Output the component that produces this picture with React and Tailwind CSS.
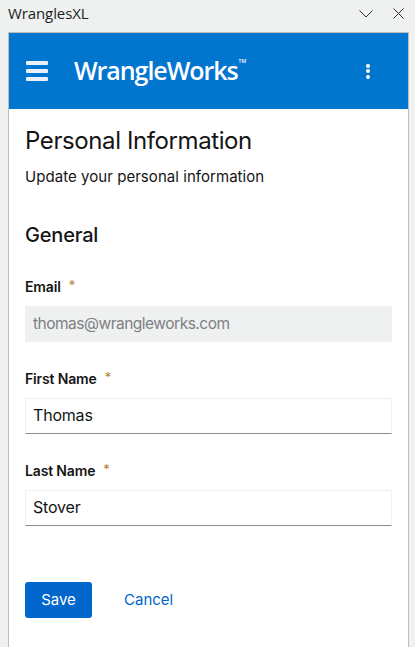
const font = "font-['Inter',sans-serif]";

function Field({ label, gap, value, disabled }) {
  return (
    <div className="flex flex-col">
      <div className="flex h-[20px] items-center pb-[2px] text-[14px] font-semibold tracking-[-0.15px] text-[#151515]">
        <span>{label}</span>
        <span className={`${gap} text-[13px] font-normal text-[#b5802f]`}>*</span>
      </div>
      {disabled ? (
        <div className="mt-[9px] flex h-[36px] items-center bg-[#eff0f0] px-[8px] text-[15.5px] tracking-[-0.5px] text-[#7d8084]">{value}</div>
      ) : (
        <div className="mt-[9px] flex h-[36px] items-center border border-[#f0f0f0] border-b-[#8a8d90] px-[7px] pb-[2px] text-[16px] tracking-[-0.2px] text-[#151515]">{value}</div>
      )}
    </div>
  );
}

export default function App() {
  return (
    <div className={`flex h-[647px] w-[415px] flex-col overflow-hidden bg-[#eff0f0] ${font}`}>
      <div className="flex h-[32px] shrink-0 items-center justify-between pb-[5px] pl-[8px] pr-[11px]">
        <span className="font-['Open_Sans',sans-serif] text-[15px] tracking-[-0.1px] text-[#201f1e]">WranglesXL</span>
        <div className="flex items-center gap-[20px]">
          <svg width="14" height="8" viewBox="0 0 14 8" fill="none" stroke="#323130" strokeWidth="1"><path d="M0.5 0.5 7 7 13.5 0.5" /></svg>
          <svg width="11" height="11" viewBox="0 0 11 11" fill="none" stroke="#323130" strokeWidth="1"><path d="M0.5 0.5 10.5 10.5M10.5 0.5 0.5 10.5" /></svg>
        </div>
      </div>
      <div className="ml-[8px] flex w-[401px] flex-1 flex-col border border-b-0 border-[#bdbdbd] bg-white">
        <header className="flex h-[76px] shrink-0 items-center bg-[#0275cf] pl-[17px] pr-[38px]">
          <div className="flex w-[22px] flex-col gap-[4px]">
            <span className="h-[4px] rounded-[1px] bg-[#eaf1fa]" />
            <span className="h-[4px] rounded-[1px] bg-[#eaf1fa]" />
            <span className="h-[4px] rounded-[1px] bg-[#eaf1fa]" />
          </div>
          <div className="ml-[26px] flex flex-1 items-start pb-[2px] font-['Open_Sans',sans-serif] text-[25px] font-semibold leading-none tracking-[-1.05px] text-white">
            <span>WrangleWorks</span>
            <span className="ml-[1px] mt-[1px] text-[5px] leading-none tracking-normal">TM</span>
          </div>
          <div className="flex flex-col gap-[1.5px]">
            <span className="size-[4px] rounded-full bg-white" />
            <span className="size-[4px] rounded-full bg-white" />
            <span className="size-[4px] rounded-full bg-white" />
          </div>
        </header>
        <main className="flex flex-col px-[16px]">
          <h1 className="mt-[14px] text-[24px] leading-[36px] tracking-[-0.4px] text-[#151515]">Personal Information</h1>
          <p className="mt-[6px] text-[15px] leading-[24px] tracking-[0.05px] text-[#151515]">Update your personal information</p>
          <h2 className="mt-[31px] text-[20px] font-medium leading-[30px] tracking-[-0.2px] text-[#151515]">General</h2>
          <div className="mt-[27px] flex flex-col gap-[27px]">
            <Field label="Email" gap="ml-[8px]" value="thomas@wrangleworks.com" disabled />
            <Field label="First Name" gap="ml-[8px]" value="Thomas" />
            <Field label="Last Name" gap="ml-[8px]" value="Stover" />
          </div>
          <div className="mt-[56px] flex items-center">
            <button className="h-[36px] w-[67px] rounded-[3px] bg-[#0066cc] text-[15px] text-white">Save</button>
            <button className="ml-[32px] text-[15px] text-[#0066cc]">Cancel</button>
          </div>
        </main>
      </div>
    </div>
  );
}
